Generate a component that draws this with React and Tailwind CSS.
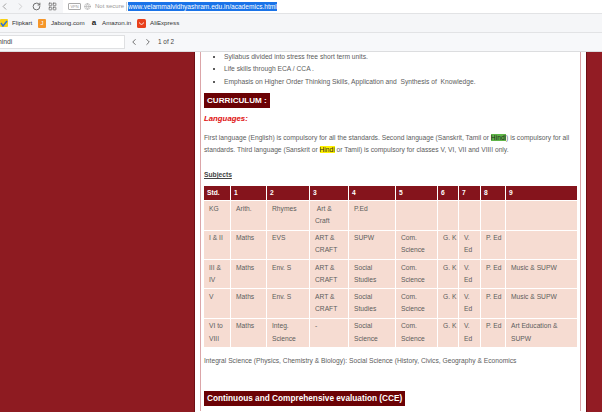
import React from "react";
import { ChevronLeft, ChevronRight, RotateCw, LayoutGrid, Globe } from "lucide-react";

const head = ["Std.", "1", "2", "3", "4", "5", "6", "7", "8", "9"];
const widths = [
  "w-[26px]", "w-[35px]", "w-[42px]", "w-[38px]", "w-[46px]",
  "w-[41px]", "w-[20px]", "w-[21px]", "w-[24px]", "w-[71px]",
];

const rows = [
  ["KG", "Arith.", "Rhymes", "\u00a0Art & Craft", "P.Ed", "", "", "", "", ""],
  ["I & II", "Maths", "EVS", "ART & CRAFT", "SUPW", "Com. Science", "G.\u00a0K", "V. Ed", "P.\u00a0Ed", ""],
  ["III & IV", "Maths", "Env. S", "ART & CRAFT", "Social Studies", "Com. Science", "G.\u00a0K", "V. Ed", "P.\u00a0Ed", "Music & SUPW"],
  ["V", "Maths", "Env. S", "ART & CRAFT", "Social Studies", "Com. Science", "G.\u00a0K", "V. Ed", "P.\u00a0Ed", "Music & SUPW"],
  ["VI to VIII", "Maths", "Integ. Science", "-", "Social Science", "Com. Science", "G.\u00a0K", "V. Ed", "P.\u00a0Ed", "Art Education & SUPW"],
];

function Heading({ children, className = "" }) {
  return (
    <div className={`h-[15px] w-fit bg-[#6b0205] px-[3px] font-bold leading-[15px] text-white ${className}`}>
      {children}
    </div>
  );
}

export default function App() {
  return (
    <div className="h-[412px] w-[602px] overflow-hidden bg-white font-['Liberation_Sans',Arial,sans-serif] text-[#5c5c5c]">
      {/* Browser toolbar */}
      <div className="flex h-[14px] items-center border-b border-[#e2e3e5] bg-[#f5f6f8]">
        <ChevronLeft className="ml-[-1px] h-[11px] w-[11px] text-[#999]" />
        <ChevronRight className="ml-[5px] h-[11px] w-[11px] text-[#ccc]" />
        <RotateCw className="ml-[6px] h-[9px] w-[9px] text-[#666]" strokeWidth={2.5} />
        <LayoutGrid className="ml-[7px] h-[9px] w-[9px] text-[#666]" />
        <div className="ml-[6px] flex h-[13px] flex-1 items-center bg-white pl-[5px] text-[6px] text-[#999]">
          <span className="flex h-[7px] w-[13px] items-center justify-center rounded-[1px] border border-[#aaa] text-[4px] leading-none">VPN</span>
          <Globe className="ml-[3px] h-[7px] w-[7px] text-[#aaa]" />
          <span className="ml-[4px] w-[28px] whitespace-nowrap">Not secure</span>
          <span className="ml-[3px] h-[9px] border-l border-[#ccc]" />
          <span className="ml-[1px] whitespace-nowrap bg-[#1a73e8] text-[6.6px] leading-[9px] text-white">www.velammalvidhyashram.edu.in/academics.html</span>
        </div>
      </div>

      {/* Bookmarks */}
      <div className="flex h-[19px] items-center border-b border-[#e2e3e5] bg-[#f5f6f8] text-[6.2px] text-[#333]">
        <svg viewBox="0 0 8 8" className="h-[8px] w-[8px]">
          <rect width="8" height="8" rx="1" fill="#f7d117" />
          <path d="M1 4l2 3 4-5" fill="none" stroke="#2a6fdb" strokeWidth="1.4" />
        </svg>
        <span className="ml-[4px] w-[20px] whitespace-nowrap">Flipkart</span>
        <div className="ml-[6px] flex h-[9px] w-[8px] items-center justify-center rounded-[1px] bg-[#f5962a] text-[6px] leading-none text-white">J</div>
        <span className="ml-[5px] w-[33px] whitespace-nowrap">Jabong.com</span>
        <div className="ml-[7px] w-[6px] text-center text-[8px] font-bold leading-none text-[#222]">a</div>
        <span className="ml-[5px] w-[29px] whitespace-nowrap">Amazon.in</span>
        <svg viewBox="0 0 9 9" className="ml-[6px] h-[9px] w-[9px]">
          <rect width="9" height="9" rx="1.5" fill="#e8401c" />
          <path d="M2.5 3.5c.5 2.5 3.5 2.5 4 0" fill="none" stroke="#fff" strokeWidth="0.9" />
        </svg>
        <span className="ml-[4px] whitespace-nowrap">AliExpress</span>
      </div>

      {/* Find bar */}
      <div className="flex h-[19px] items-center border-b border-[#dcdddf] bg-[#f7f8fa] text-[6.4px] text-[#444]">
        <div className="flex h-[14px] w-[125px] items-center overflow-hidden border-y border-r border-[#dfe0e2] bg-white">
          <span className="ml-[-2px] text-[6.8px]">hindi</span>
        </div>
        <ChevronLeft className="ml-[4px] h-[10px] w-[10px] text-[#555]" />
        <ChevronRight className="ml-[4px] h-[10px] w-[10px] text-[#555]" />
        <span className="ml-[5px]">1 of 2</span>
      </div>

      {/* Page */}
      <div className="flex h-[360px] overflow-hidden bg-[#911d23]">
        <div className="w-[194px] shrink-0 bg-[#8e1b21]" />
        <div className="w-[1px] shrink-0 bg-[#6e0f14]" />
        <div className="w-[391px] shrink-0 bg-white px-[5px]">
          <div className="h-full border-x border-[#dba5a8] px-[3px] text-[6.7px] leading-[12.3px]">
            <ul className="mt-[-1px] list-[square] pl-[20px]">
              <li>Syllabus divided into stress free short term units.</li>
              <li>Life skills through ECA / CCA .</li>
              <li>Emphasis on Higher Order Thinking Skills, Application and &nbsp;Synthesis of &nbsp;Knowledge.</li>
            </ul>

            <Heading className="mt-[5px] text-[8.1px]">CURRICULUM :</Heading>

            <p className="mt-[5px] text-[7.8px] font-bold italic leading-[11px] text-[#e01010]">Languages:</p>

            <p className="mt-[8px]">
              First language (English) is compulsory for all the standards. Second language (Sanskrit, Tamil or{" "}
              <span className="bg-[#5fb548] text-[#222]">Hindi</span>) is compulsory for all standards. Third language (Sanskrit or{" "}
              <span className="bg-[#fff200] text-[#222]">Hindi</span> or Tamil) is compulsory for classes V, VI, VII and VIIII only.
            </p>

            <p className="mt-[13px] font-bold text-[#444] underline">Subjects</p>

            <table className="ml-[-1px] mt-[3px] w-[375px] table-fixed border-separate border-spacing-[1px]">
              <thead>
                <tr className="bg-[#85141c] text-white">
                  {head.map((h, i) => (
                    <th key={h} className={`${widths[i]} h-[14.5px] px-[3px] text-left font-bold leading-[14px]`}>{h}</th>
                  ))}
                </tr>
              </thead>
              <tbody>
                {rows.map((r) => (
                  <tr key={r[0]} className="bg-[#f6dcd2]">
                    {r.map((c, i) => (
                      <td key={i} className="h-[28.4px] px-[5px] pt-[1.5px] align-top leading-[12.3px]">{c}</td>
                    ))}
                  </tr>
                ))}
              </tbody>
            </table>

            <p className="mt-[7px]">Integral Science (Physics, Chemistry &amp; Biology): Social Science (History, Civics, Geography &amp; Economics</p>

            <Heading className="mt-[23px] text-[8.25px]">Continuous and Comprehensive evaluation (CCE)</Heading>
          </div>
        </div>
        <div className="w-[1px] shrink-0 bg-[#6e0f14]" />
        <div className="flex-1 bg-[#921c24]" />
      </div>
    </div>
  );
}
